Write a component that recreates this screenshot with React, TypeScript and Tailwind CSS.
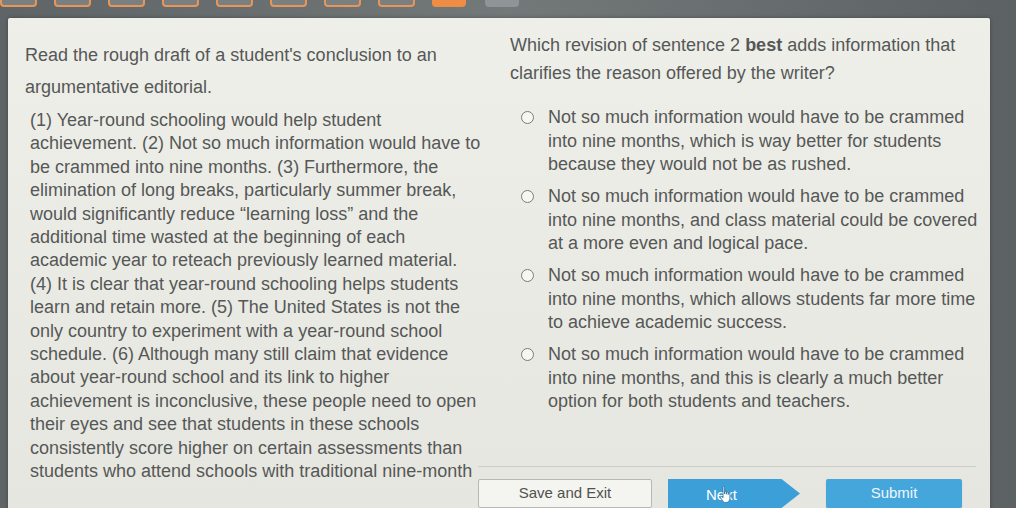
import React from "react";

const passage = [
  "(1) Year-round schooling would help student",
  "achievement. (2) Not so much information would have to",
  "be crammed into nine months. (3) Furthermore, the",
  "elimination of long breaks, particularly summer break,",
  "would significantly reduce \u201Clearning loss\u201D and the",
  "additional time wasted at the beginning of each",
  "academic year to reteach previously learned material.",
  "(4) It is clear that year-round schooling helps students",
  "learn and retain more. (5) The United States is not the",
  "only country to experiment with a year-round school",
  "schedule. (6) Although many still claim that evidence",
  "about year-round school and its link to higher",
  "achievement is inconclusive, these people need to open",
  "their eyes and see that students in these schools",
  "consistently score higher on certain assessments than",
  "students who attend schools with traditional nine-month",
];

const options = [
  [
    "Not so much information would have to be crammed",
    "into nine months, which is way better for students",
    "because they would not be as rushed.",
  ],
  [
    "Not so much information would have to be crammed",
    "into nine months, and class material could be covered",
    "at a more even and logical pace.",
  ],
  [
    "Not so much information would have to be crammed",
    "into nine months, which allows students far more time",
    "to achieve academic success.",
  ],
  [
    "Not so much information would have to be crammed",
    "into nine months, and this is clearly a much better",
    "option for both students and teachers.",
  ],
];

function Hand() {
  return (
    <svg width="16" height="20" viewBox="0 0 16 20" className="absolute left-[50px] top-[6px]">
      <path
        d="M5 2.2c0-.9 1.6-.9 1.6 0V9l.2-2.2c.1-.9 1.6-.9 1.6 0v2.4l.2-1.6c.1-.9 1.6-.9 1.6 0v2l.2-1c.2-.8 1.5-.7 1.5.1v4.6c0 2.3-1.4 4.2-3.8 4.2H7.6c-1.3 0-2.2-.6-2.9-1.6L2.2 12.2c-.5-.8.5-1.6 1.2-1L5 12.8V2.2z"
        fill="#ffffff"
        stroke="#2a6e95"
        strokeWidth="0.8"
      />
    </svg>
  );
}

export default function App() {
  return (
    <div
      className="relative h-[508px] w-[1016px] overflow-hidden bg-gradient-to-r from-[#5f6466] via-[#737879] to-[#5c6163]"
      style={{ fontFamily: '"Liberation Sans", Arial, sans-serif' }}
    >
      {/* progress tabs */}
      <div className="flex gap-[17px] -mt-[4px]">
        {Array.from({ length: 8 }).map((_, i) => (
          <div key={i} className="h-[11px] w-[37px] rounded-b-[4px] border-2 border-[#e8955a] bg-[#7a7f81]" />
        ))}
        <div className="h-[11px] w-[34px] rounded-b-[4px] bg-[#f08d45]" />
        <div className="ml-[2px] h-[11px] w-[34px] rounded-b-[4px] bg-[#8f9496]" />
      </div>

      {/* panel */}
      <div className="ml-[8px] mt-[11px] flex h-[500px] w-[982px] rounded-[2px] bg-gradient-to-b from-[#efefea] to-[#e6e6e0] text-[#555856] shadow-[0_0_4px_rgba(0,0,0,0.3)]">
        {/* left column */}
        <div className="w-[470px] shrink-0 pl-[17px] pt-[21px] text-[18px]">
          <div className="whitespace-nowrap leading-[32px]">
            <div>Read the rough draft of a student's conclusion to an</div>
            <div>argumentative editorial.</div>
          </div>
          <div className="mt-[6px] whitespace-nowrap pl-[5px] leading-[23.4px]">
            {passage.map((l, i) => (
              <div key={i}>{l}</div>
            ))}
          </div>
        </div>

        {/* right column */}
        <div className="flex flex-1 flex-col">
          <div className="pl-[32px] pt-[13px] text-[18px]">
            <div className="whitespace-nowrap leading-[28px]">
              <div>
                Which revision of sentence 2 <span className="font-bold">best</span> adds information that
              </div>
              <div>clarifies the reason offered by the writer?</div>
            </div>
            <div className="mt-[19px] flex flex-col gap-[8.5px]">
              {options.map((opt, i) => (
                <div key={i} className="flex">
                  <div className="flex h-[23.5px] w-[38px] shrink-0 items-center pl-[11px]">
                    <div className="h-[13px] w-[13px] rounded-full border-[1.5px] border-[#7a7c7a] bg-[#f6f6f2]" />
                  </div>
                  <div className="whitespace-nowrap leading-[23.5px]">
                    {opt.map((l, j) => (
                      <div key={j}>{l}</div>
                    ))}
                  </div>
                </div>
              ))}
            </div>
          </div>

          {/* footer */}
          <div className="mb-[10px] mr-[14px] mt-auto flex h-[42px] items-end gap-[16px] border-t border-[#cfcfc9] text-[15px]">
            <button className="h-[29px] w-[174px] rounded-[2px] border border-[#b8b8b2] bg-[#f4f4f0] text-[#4f5250]">
              Save and Exit
            </button>
            <button className="relative h-[29px] w-[132px] bg-[#3d9fd7] text-white [clip-path:polygon(0_0,86%_0,100%_50%,86%_100%,0_100%)]">
              <span className="absolute left-[38px] top-[5px]">Next</span>
              <Hand />
            </button>
            <button className="ml-[10px] h-[29px] w-[136px] rounded-[2px] bg-[#45a6dc] text-[#eef7fc] shadow-[0_1px_1px_rgba(0,0,0,0.2)]">
              Submit
            </button>
          </div>
        </div>
      </div>
    </div>
  );
}
